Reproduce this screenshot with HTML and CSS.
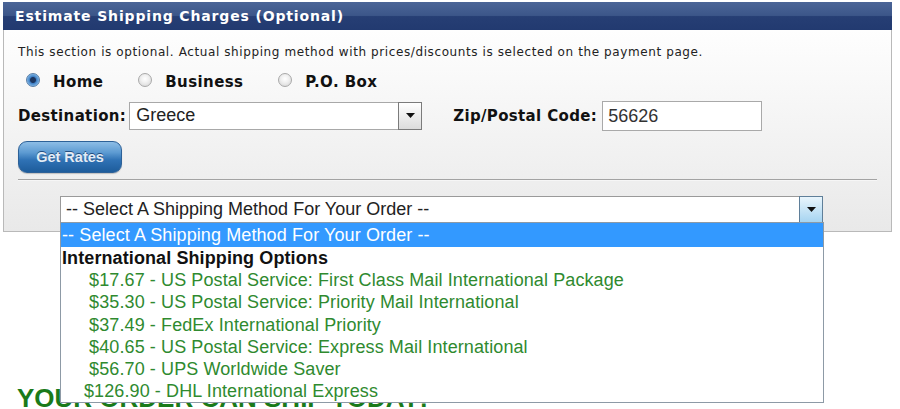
FILE: index.html
```html
<!DOCTYPE html>
<html>
<head>
<meta charset="utf-8">
<title>Estimate Shipping Charges</title>
<link rel="stylesheet" href="styles.css">
</head>
<body>
<div class="panel">
  <div class="panel-head">Estimate Shipping Charges (Optional)</div>
  <div class="panel-body">
    <p class="intro">This section is optional. Actual shipping method with prices/discounts is selected on the payment page.</p>
    <div class="radios">
      <label class="radio-item"><span class="radio checked"></span><span class="radio-label">Home</span></label>
      <label class="radio-item"><span class="radio"></span><span class="radio-label">Business</span></label>
      <label class="radio-item"><span class="radio"></span><span class="radio-label">P.O. Box</span></label>
    </div>
    <div class="dest-row">
      <span class="field-label dest-label">Destination:</span>
      <div class="select dest-select">
        <span class="select-value">Greece</span>
        <span class="select-btn"><svg width="9" height="5" viewBox="0 0 9 5"><path d="M0 0H9L4.5 5Z" fill="#111"/></svg></span>
      </div>
      <span class="field-label zip-label">Zip/Postal Code:</span>
      <div class="zip-input">56626</div>
    </div>
    <div class="btn-row"><button class="get-rates">Get Rates</button></div>
    <div class="sep"></div>
    <div class="ship-row">
      <div class="select ship-select">
        <span class="select-value">-- Select A Shipping Method For Your Order --</span>
        <span class="select-btn focus"><svg width="9" height="5" viewBox="0 0 9 5"><path d="M0 0H9L4.5 5Z" fill="#111"/></svg></span>
        <ul class="dropdown">
          <li class="opt active">-- Select A Shipping Method For Your Order --</li>
          <li class="group">International Shipping Options</li>
          <li class="opt item"> $17.67 - US Postal Service: First Class Mail International Package</li>
          <li class="opt item"> $35.30 - US Postal Service: Priority Mail International</li>
          <li class="opt item"> $37.49 - FedEx International Priority</li>
          <li class="opt item"> $40.65 - US Postal Service: Express Mail International</li>
          <li class="opt item"> $56.70 - UPS Worldwide Saver</li>
          <li class="opt item">$126.90 - DHL International Express</li>
        </ul>
      </div>
    </div>
  </div>
</div>
<h2 class="promo">YOUR ORDER CAN SHIP TODAY!</h2>
</body>
</html>
```
FILE: styles.css
```css
* { box-sizing: border-box; }
body {
  margin: 0;
  background: #fff;
  font-family: "DejaVu Sans", "Liberation Sans", sans-serif;
  color: #111;
}
.panel {
  margin: 2px 0 0 3px;
  width: 889px;
}
.panel-head {
  height: 28px;
  line-height: 28px;
  padding-left: 12px;
  color: #fff;
  font-weight: bold;
  font-size: 14px;
  letter-spacing: 0.85px;
  background: linear-gradient(#4b6597 0%, #3c5689 48%, #263e74 52%, #223a70 100%);
}
.panel-body {
  border: 1px solid #b9b9b9;
  border-top: 0;
  background: linear-gradient(#fefefe, #e9e9e9);
  padding: 15px 14px 8px 14px;
}
.intro {
  margin: 0;
  font-size: 12px;
  letter-spacing: 0.6px;
  line-height: 14px;
  color: #222;
}
.radios {
  margin-top: 13px;
  height: 20px;
  display: flex;
  align-items: center;
  padding-left: 8px;
}
.radio-item {
  display: flex;
  align-items: center;
  margin-right: 35px;
}
.radio {
  width: 14px;
  height: 14px;
  border-radius: 50%;
  border: 1px solid #a9a9a9;
  background: radial-gradient(circle at 50% 40%, #ffffff 0, #f0f0f0 40%, #d2d2d2 100%);
  margin-right: 13px;
  position: relative;
  top: -2px;
}
.radio.checked {
  border-color: #5b7ea6;
  background: radial-gradient(circle at 50% 50%, #1c355f 0, #1c355f 2.5px, #3f7fc4 3.5px, #7db5e6 6px, #a9cdee 100%);
}
.radio-label {
  font-size: 15px;
  font-weight: bold;
  letter-spacing: 0.4px;
  color: #111;
}
.dest-row {
  margin-top: 9px;
  display: flex;
  align-items: center;
  height: 29px;
}
.field-label {
  font-size: 15px;
  font-weight: bold;
  letter-spacing: 0.35px;
  color: #111;
}
.dest-label { margin-right: 3px; }
.select {
  position: relative;
  display: flex;
  align-items: center;
  background: #fff;
  border: 1px solid #a8a8a8;
  font-family: "Liberation Sans", Arial, sans-serif;
  font-size: 18px;
  color: #222;
}
.select-value { flex: 1; white-space: nowrap; }
.select-btn {
  align-self: stretch;
  width: 24px;
  display: flex;
  align-items: center;
  justify-content: center;
  border: 1px solid #7b7b7b;
  background: linear-gradient(#ffffff, #dcdcdc);
  margin: -1px -1px -1px 0;
}
.select-btn.focus {
  border-color: #5f7f99;
  background: linear-gradient(#e9f5fc, #a6d4f1);
}
.dest-select {
  width: 293px;
  height: 28px;
  padding-left: 6px;
}
.zip-label { margin-left: 31px; margin-right: 5px; }
.zip-input {
  width: 160px;
  height: 30px;
  border: 1px solid #a9a9a9;
  background: #fff;
  font-family: "Liberation Sans", Arial, sans-serif;
  font-size: 18px;
  line-height: 28px;
  padding-left: 5px;
  color: #333;
}
.btn-row { margin-top: 11px; }
.get-rates {
  width: 104px;
  height: 32px;
  border-radius: 9px;
  border: 1px solid #2d6198;
  background: linear-gradient(#8dbde6 0%, #5d9bd2 35%, #2f72b5 60%, #1d5c9b 100%);
  color: #e3ecf6;
  font-family: "Liberation Sans", Arial, sans-serif;
  font-weight: bold;
  font-size: 14.5px;
  text-shadow: 0 -1px 0 #234f80;
  padding: 0;
  box-shadow: 0 1px 1px rgba(0,0,0,0.2);
}
.sep {
  margin-top: 6px;
  height: 1px;
  background: #a3a3a3;
  box-shadow: 0 1px 0 #f6f6f6;
}
.ship-row {
  margin-top: 16px;
  padding-left: 42px;
}
.ship-select {
  width: 763px;
  height: 27px;
  padding-left: 5px;
  border-color: #9a9a9a;
}
.dropdown {
  position: absolute;
  top: 25px;
  left: -1px;
  width: 764px;
  margin: 0;
  padding: 0;
  list-style: none;
  background: #fff;
  border: 1px solid #8d9aa6;
  z-index: 5;
}
.dropdown li {
  height: 22.2px;
  line-height: 22.2px;
  padding-left: 1px;
  white-space: pre;
  letter-spacing: 0.1px;
}
.dropdown li.active {
  height: 24px;
  line-height: 24px;
  background: #3399ff;
  color: #fff;
}
.dropdown li.group {
  font-weight: bold;
  color: #111;
}
.dropdown li.item {
  padding-left: 23px;
  color: #2f8a2f;
}
.promo {
  margin: 151px 0 0 17px;
  font-family: "Liberation Sans", Arial, sans-serif;
  font-size: 26px;
  line-height: 30px;
  font-weight: bold;
  color: #1a7a1a;
}
```
